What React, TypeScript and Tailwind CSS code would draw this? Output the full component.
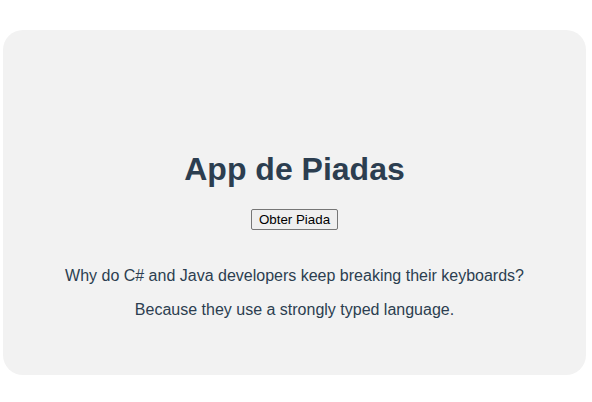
import React from "react";

export default function App() {
  return (
    <div className="w-[592px] h-[402px] bg-white pt-[30px] pl-[3px]" style={{ fontFamily: '"Liberation Sans", Arial, sans-serif' }}>
      <div className="w-[583px] h-[345px] bg-[#f2f2f2] rounded-[20px] flex flex-col items-center pt-[121px]">
        <h1 className="text-[32px] font-bold leading-[37px] text-[#2c3e50]">App de Piadas</h1>
        <button className="mt-[21px] border border-[#767676] rounded-[2px] bg-[#efefef] px-[7px] py-[2px] text-[13.33px] leading-[15px] text-black">
          Obter Piada
        </button>
        <p className="mt-[37px] text-[16px] leading-[18px] text-[#2c3e50]">
          Why do C# and Java developers keep breaking their keyboards?
        </p>
        <p className="mt-[16px] text-[16px] leading-[18px] text-[#2c3e50]">
          Because they use a strongly typed language.
        </p>
      </div>
    </div>
  );
}
